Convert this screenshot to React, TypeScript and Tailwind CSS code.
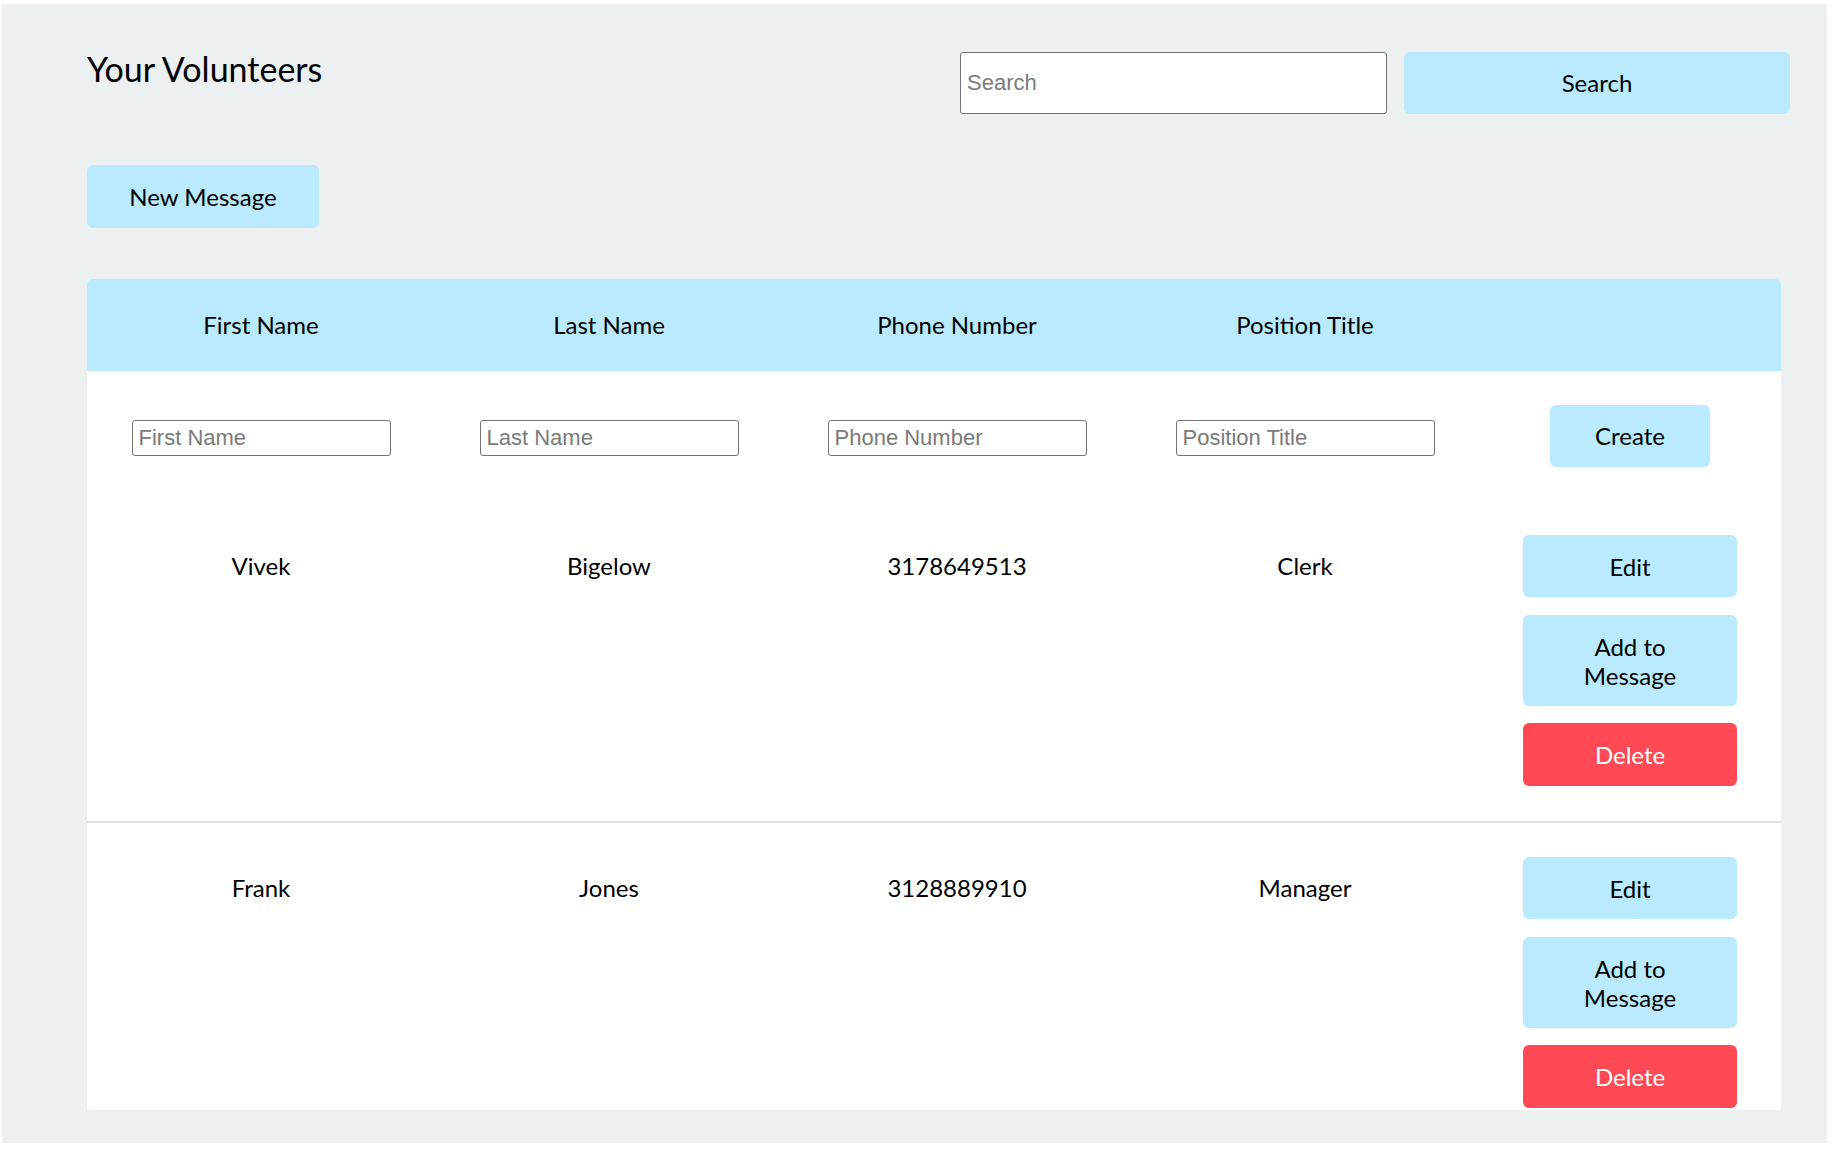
import React from "react";

const cols = "grid grid-cols-[348px_348px_348px_348px_1fr]";

function TextCell({ children }: { children: React.ReactNode }) {
  return (
    <div className="h-[62px] flex items-center justify-center text-[24px] text-black">
      {children}
    </div>
  );
}

function Actions() {
  return (
    <div className="flex flex-col items-center">
      <button className="w-[214px] h-[62px] rounded-[6px] bg-[#b9eafd] text-[24px] leading-[29px] text-black">
        Edit
      </button>
      <button className="mt-[18px] w-[214px] h-[91px] rounded-[6px] bg-[#b9eafd] text-[24px] leading-[29px] text-black">
        Add to
        <br />
        Message
      </button>
      <button className="mt-[17px] w-[214px] h-[63px] rounded-[6px] bg-[#ff4a55] text-[24px] leading-[29px] text-white">
        Delete
      </button>
    </div>
  );
}

function Row({ first, last, phone, title }: { first: string; last: string; phone: string; title: string }) {
  return (
    <div className={`${cols} items-start pt-[34px] pb-[35px]`}>
      <TextCell>{first}</TextCell>
      <TextCell>{last}</TextCell>
      <TextCell>{phone}</TextCell>
      <TextCell>{title}</TextCell>
      <Actions />
    </div>
  );
}

function FieldInput({ placeholder }: { placeholder: string }) {
  return (
    <div className="flex justify-center pt-[3px]">
      <input
        placeholder={placeholder}
        className="w-[259px] h-[36px] border border-[#737373] rounded-[3px] bg-white px-[6px] text-[22px] [font-family:'Liberation_Sans',Arial,sans-serif] placeholder:text-[#7a7a7a] outline-none"
      />
    </div>
  );
}

export default function App() {
  return (
    <div className="w-[1835px] h-[1152px] bg-white pt-[4px] pl-[2px] [font-family:Lato,'Noto_Sans',sans-serif]">
      <div className="w-[1825px] h-[1139px] bg-[#ecf0f1] pl-[85px] pr-[37px] pt-[44px] flex flex-col overflow-hidden">
        <div className="flex justify-between items-start">
          <h1 className="text-[34px] leading-[42px] font-normal text-black">Your Volunteers</h1>
          <div className="flex gap-[17px] mt-[4px]">
            <input
              placeholder="Search"
              className="w-[427px] h-[62px] border border-[#737373] rounded-[3px] bg-white px-[6px] text-[22px] [font-family:'Liberation_Sans',Arial,sans-serif] placeholder:text-[#7a7a7a] outline-none"
            />
            <button className="w-[386px] h-[62px] rounded-[6px] bg-[#b9eafd] text-[24px] text-black">
              Search
            </button>
          </div>
        </div>

        <button className="mt-[51px] w-[232px] h-[63px] rounded-[6px] bg-[#b9eafd] text-[24px] text-black">
          New Message
        </button>

        <div className="mt-[51px] mr-[9px]">
          <div className={`${cols} h-[92px] items-center bg-[#b9eafd] rounded-t-[6px] text-center text-[24px] text-black`}>
            <div>First Name</div>
            <div>Last Name</div>
            <div>Phone Number</div>
            <div>Position Title</div>
            <div></div>
          </div>
          <div className="bg-white h-[739px] overflow-hidden">
            <div className={`${cols} items-center py-[34px]`}>
              <FieldInput placeholder="First Name" />
              <FieldInput placeholder="Last Name" />
              <FieldInput placeholder="Phone Number" />
              <FieldInput placeholder="Position Title" />
              <div className="flex justify-center">
                <button className="h-[62px] px-[45px] rounded-[6px] bg-[#b9eafd] text-[24px] text-black">
                  Create
                </button>
              </div>
            </div>
            <Row first="Vivek" last="Bigelow" phone="3178649513" title="Clerk" />
            <div className="border-t-2 border-[#dde3e7]" />
            <Row first="Frank" last="Jones" phone="3128889910" title="Manager" />
          </div>
        </div>
      </div>
    </div>
  );
}
